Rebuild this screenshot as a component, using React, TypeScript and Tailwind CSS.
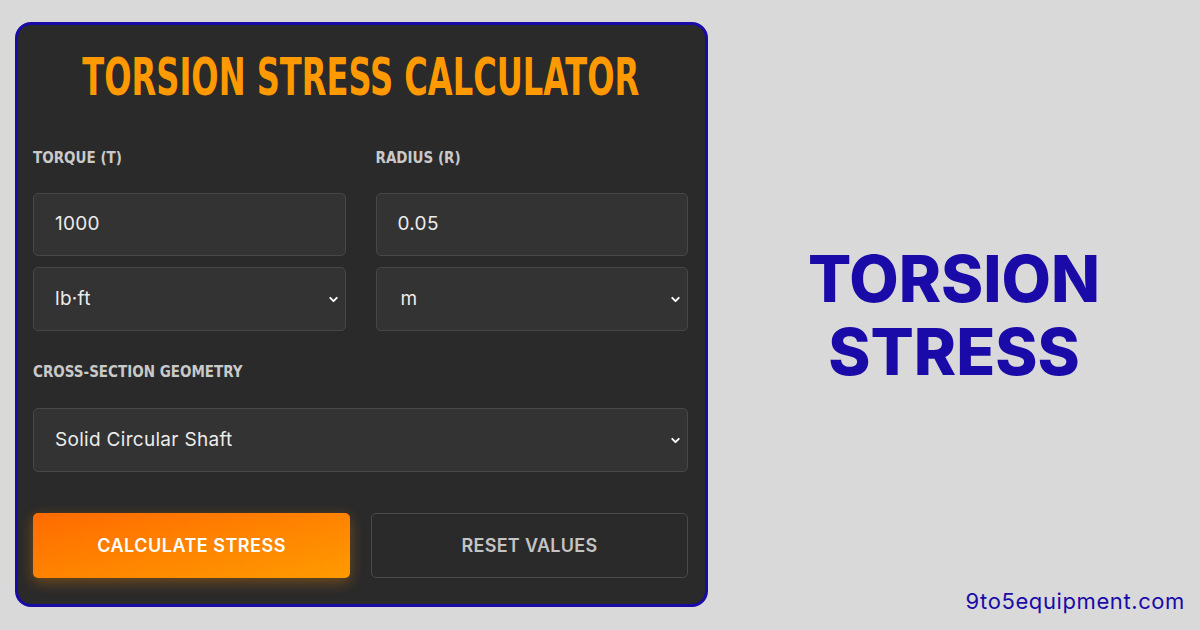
import { ChevronDown } from "lucide-react";

const condensed = { fontFamily: '"DejaVu Sans Condensed", "DejaVu Sans", sans-serif' };
const body = { fontFamily: 'Inter, "Open Sans", sans-serif' };

function Label({ children }: { children: string }) {
  return (
    <div className="text-[15px] font-bold uppercase leading-none text-[#c9c9c9]" style={condensed}>
      {children}
    </div>
  );
}

function Field({ value }: { value: string }) {
  return (
    <div className="flex h-[63px] items-center rounded-[5px] border border-[#474747] bg-[#333333] pl-[21px] text-[19px] tracking-[0.3px] text-[#ececec]" style={body}>
      {value}
    </div>
  );
}

function Select({ value, indent = "pl-[21px]" }: { value: string; indent?: string }) {
  return (
    <div className={`flex h-[64px] items-center justify-between rounded-[5px] border border-[#474747] bg-[#333333] pr-[5px] text-[19px] tracking-[0.3px] text-[#ececec] ${indent}`} style={body}>
      <span>{value}</span>
      <ChevronDown className="h-[13px] w-[13px] text-white" strokeWidth={3.5} />
    </div>
  );
}

export default function App() {
  return (
    <div className="flex h-[630px] w-[1200px] bg-[#d9d9d9]">
      <div className="ml-[15px] mt-[22px] h-[585px] w-[693px] rounded-[16px] border-[3px] border-[#1a0aa8] bg-[#2a2a2a] pl-[15px] pr-[17px]">
        <div className="flex h-[104px] items-center justify-center">
          <h1
            className="inline-block scale-x-[0.7] whitespace-nowrap text-[51px] font-bold leading-none text-[#ff9900]"
            style={condensed}
          >
            TORSION STRESS CALCULATOR
          </h1>
        </div>

        <div className="mt-[22px] grid grid-cols-2 gap-x-[30px]">
          <div className="flex flex-col">
            <Label>Torque (T)</Label>
            <div className="mt-[27px] flex flex-col gap-[11px]">
              <Field value="1000" />
              <Select value="lb·ft" />
            </div>
          </div>
          <div className="flex flex-col">
            <Label>Radius (R)</Label>
            <div className="mt-[27px] flex flex-col gap-[11px]">
              <Field value="0.05" />
              <Select value="m" indent="pl-[24px]" />
            </div>
          </div>
        </div>

        <div className="mt-[34px]">
          <Label>Cross-Section Geometry</Label>
          <div className="mt-[28px]">
            <Select value="Solid Circular Shaft" />
          </div>
        </div>

        <div className="mt-[41px] grid grid-cols-2 gap-x-[21px]">
          <button
            type="button"
            className="h-[65px] rounded-[5px] bg-gradient-to-br from-[#ff6a00] to-[#ff9a00] text-[18px] font-semibold tracking-[0.5px] text-white shadow-[0_4px_14px_rgba(255,140,0,0.35)]"
            style={body}
          >
            CALCULATE STRESS
          </button>
          <button
            type="button"
            className="h-[65px] rounded-[5px] border border-[#4a4a4a] bg-[#2a2a2a] text-[18px] font-semibold tracking-[0.3px] text-[#c4c4c4]"
            style={body}
          >
            RESET VALUES
          </button>
        </div>
      </div>

      <div className="relative flex flex-1 flex-col">
        <div className="flex flex-1 items-center justify-center">
          <div className="text-center text-[64px] font-extrabold leading-[73px] text-[#1a0aa8]" style={body}>
            TORSION
            <br />
            STRESS
          </div>
        </div>
        <div className="absolute bottom-[12px] right-[15px] text-[22px] tracking-[0.6px] text-[#1a0aa8]" style={body}>
          9to5equipment.com
        </div>
      </div>
    </div>
  );
}
